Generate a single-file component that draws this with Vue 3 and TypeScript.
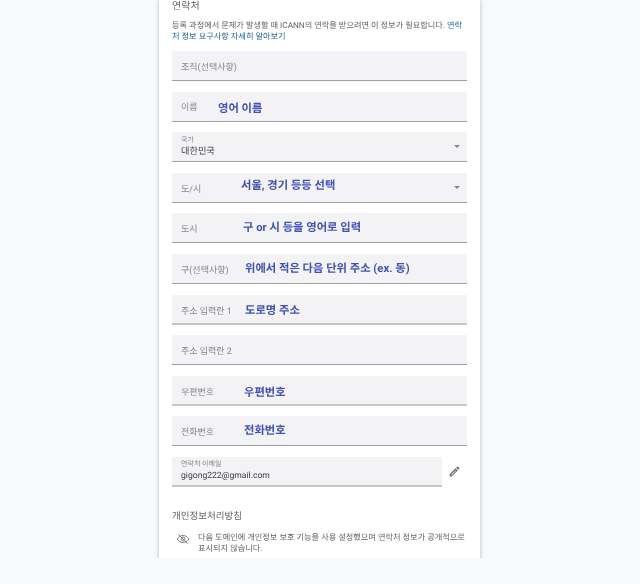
<script setup lang="ts">
interface Field {
  label: string
  note?: string
  noteLeft?: number
  noteTop?: number
  value?: string
  select?: boolean
  labelTop: number
  thick?: boolean
}
const fields: Field[] = [
  { label: '조직(선택사항)', labelTop: 2 },
  { label: '이름', note: '영어 이름', noteLeft: 46, noteTop: 10, labelTop: 1 },
  { label: '국가', value: '대한민국', select: true, labelTop: 0 },
  { label: '도/시', note: '서울, 경기 등등 선택', noteLeft: 69, noteTop: 6, select: true, labelTop: 2 },
  { label: '도시', note: '구 or 시 등을 영어로 입력', noteLeft: 71, noteTop: 8, labelTop: 2 },
  { label: '구(선택사항)', note: '위에서 적은 다음 단위 주소 (ex. 동)', noteLeft: 73, noteTop: 8, labelTop: 2 },
  { label: '주소 입력란 1', note: '도로명 주소', noteLeft: 73, noteTop: 9, thick: true, labelTop: 3 },
  { label: '주소 입력란 2', labelTop: 2 },
  { label: '우편번호', note: '우편번호', noteLeft: 72, noteTop: 10, labelTop: 3, thick: true },
  { label: '전화번호', note: '전화번호', noteLeft: 72, noteTop: 8, labelTop: 2 }
]
</script>

<template>
  <main class="page">
    <div class="clip">
      <section class="card">
        <h2 class="heading">연락처</h2>
        <p class="intro">
          등록 과정에서 문제가 발생할 때 ICANN의 연락을 받으려면 이 정보가 필요합니다.
          <a class="link">연락처 정보 요구사항 자세히 알아보기</a>
        </p>
        <div class="fields">
          <div
            v-for="f in fields"
            :key="f.label"
            class="field"
            :class="{ thick: f.thick }"
          >
            <template v-if="f.value">
              <span class="mini">{{ f.label }}</span>
              <span class="value">{{ f.value }}</span>
            </template>
            <span v-else class="label" :style="{ transform: `translateY(${f.labelTop}px)` }">{{ f.label }}</span>
            <span
              v-if="f.note"
              class="note"
              :style="{ left: `${f.noteLeft}px`, top: `${f.noteTop}px` }"
            >{{ f.note }}</span>
            <span v-if="f.select" class="caret"></span>
          </div>
          <div class="email-row">
            <div class="field thick email">
              <span class="mini">연락처 이메일</span>
              <span class="value address">gigong222@gmail.com</span>
            </div>
            <svg class="pencil" viewBox="0 0 24 24" width="13" height="13" aria-hidden="true">
              <path fill="#5f6368" d="M3 17.250V21h3.750L17.810 9.940l-3.750-3.750L3 17.250zM5.920 19.500H5v-.920l9.060-9.060.920.920L5.920 19.500zM20.710 7.040a1 1 0 0 0 0-1.410l-2.340-2.340a1 1 0 0 0-1.410 0l-1.830 1.830 3.750 3.750 1.830-1.830z" />
            </svg>
          </div>
        </div>
        <h3 class="privacy-title">개인정보처리방침</h3>
        <div class="privacy">
          <svg class="eye" viewBox="0 0 24 24" width="14" height="14" aria-hidden="true">
            <path fill="none" stroke="#70757a" stroke-width="1.600" d="M2 12c2.400-4 5.800-6 10-6s7.600 2 10 6c-2.400 4-5.800 6-10 6s-7.600-2-10-6z" />
            <circle cx="12" cy="12" r="3.400" fill="none" stroke="#70757a" stroke-width="1.600" />
            <path stroke="#70757a" stroke-width="1.600" d="M4 4l16 16" />
          </svg>
          <p class="privacy-text">다음 도메인에 개인정보 보호 기능을 사용 설정했으며 연락처 정보가 공개적으로 표시되지 않습니다.</p>
        </div>
      </section>
    </div>
  </main>
</template>

<style>
html, body { margin: 0; background: #f8f9fb; }
</style>

<style scoped>
.page {
  width: 640px;
  height: 584px;
  background: #f8f9fb;
  overflow: hidden;
  font-family: Roboto, "Noto Sans CJK KR", sans-serif;
  color: #3c4043;
  text-rendering: geometricPrecision;
}
.clip {
  height: 558px;
  overflow: hidden;
}
.card {
  box-sizing: border-box;
  width: 321px;
  height: 600px;
  margin-left: 159px;
  padding: 0 13px;
  background: #fff;
  box-shadow: 0 0 4px rgba(60, 64, 67, .35);
  filter: blur(.3px);
}
.heading {
  margin: 0;
  padding-top: 1px;
  font-size: 10px;
  line-height: 12px;
  font-weight: 400;
  color: #5f6368;
}
.intro {
  margin: 8px 0 0;
  font-size: 8.200px;
  line-height: 10.500px;
  color: #5f6368;
}
.link { color: #1a5f96; }
.fields {
  margin-top: 9px;
  display: flex;
  flex-direction: column;
  gap: 10.600px;
}
.field {
  position: relative;
  box-sizing: border-box;
  height: 30px;
  padding: 1px 9px 0;
  display: flex;
  flex-direction: column;
  justify-content: center;
  background: #f3f3f5;
  border-bottom: 1px solid #9aa0a6;
  border-radius: 2px 2px 0 0;
}
.field.thick { border-bottom: 2px solid #c4c7cb; }
.label {
  font-size: 9px;
  line-height: 12px;
  color: #80868b;
}
.mini {
  font-size: 7px;
  line-height: 8px;
  color: #80868b;
  transform: translateY(-1px);
}
.value {
  font-size: 9.200px;
  line-height: 12px;
  color: #3c4043;
  transform: translateY(1px);
}
.address { font-size: 8.600px; }
.note {
  position: absolute;
  font-size: 11.300px;
  line-height: 14px;
  font-weight: 700;
  color: #3f51b5;
  white-space: nowrap;
}
.caret {
  position: absolute;
  right: 7px;
  top: 13px;
  width: 0;
  height: 0;
  border-left: 3px solid transparent;
  border-right: 3px solid transparent;
  border-top: 3px solid #80868b;
}
.email-row {
  display: flex;
  align-items: center;
}
.email { width: 270px; }
.pencil { margin-left: 6px; }
.privacy-title {
  margin: 24px 0 0;
  font-size: 9.500px;
  line-height: 12px;
  font-weight: 400;
  color: #5f6368;
}
.privacy {
  margin-top: 10px;
  display: flex;
  align-items: flex-start;
  gap: 8px;
  padding-left: 4px;
}
.eye { flex: none; margin-top: -1px; }
.privacy-text {
  margin: 0;
  font-size: 8.200px;
  line-height: 11px;
  color: #5f6368;
}
</style>
